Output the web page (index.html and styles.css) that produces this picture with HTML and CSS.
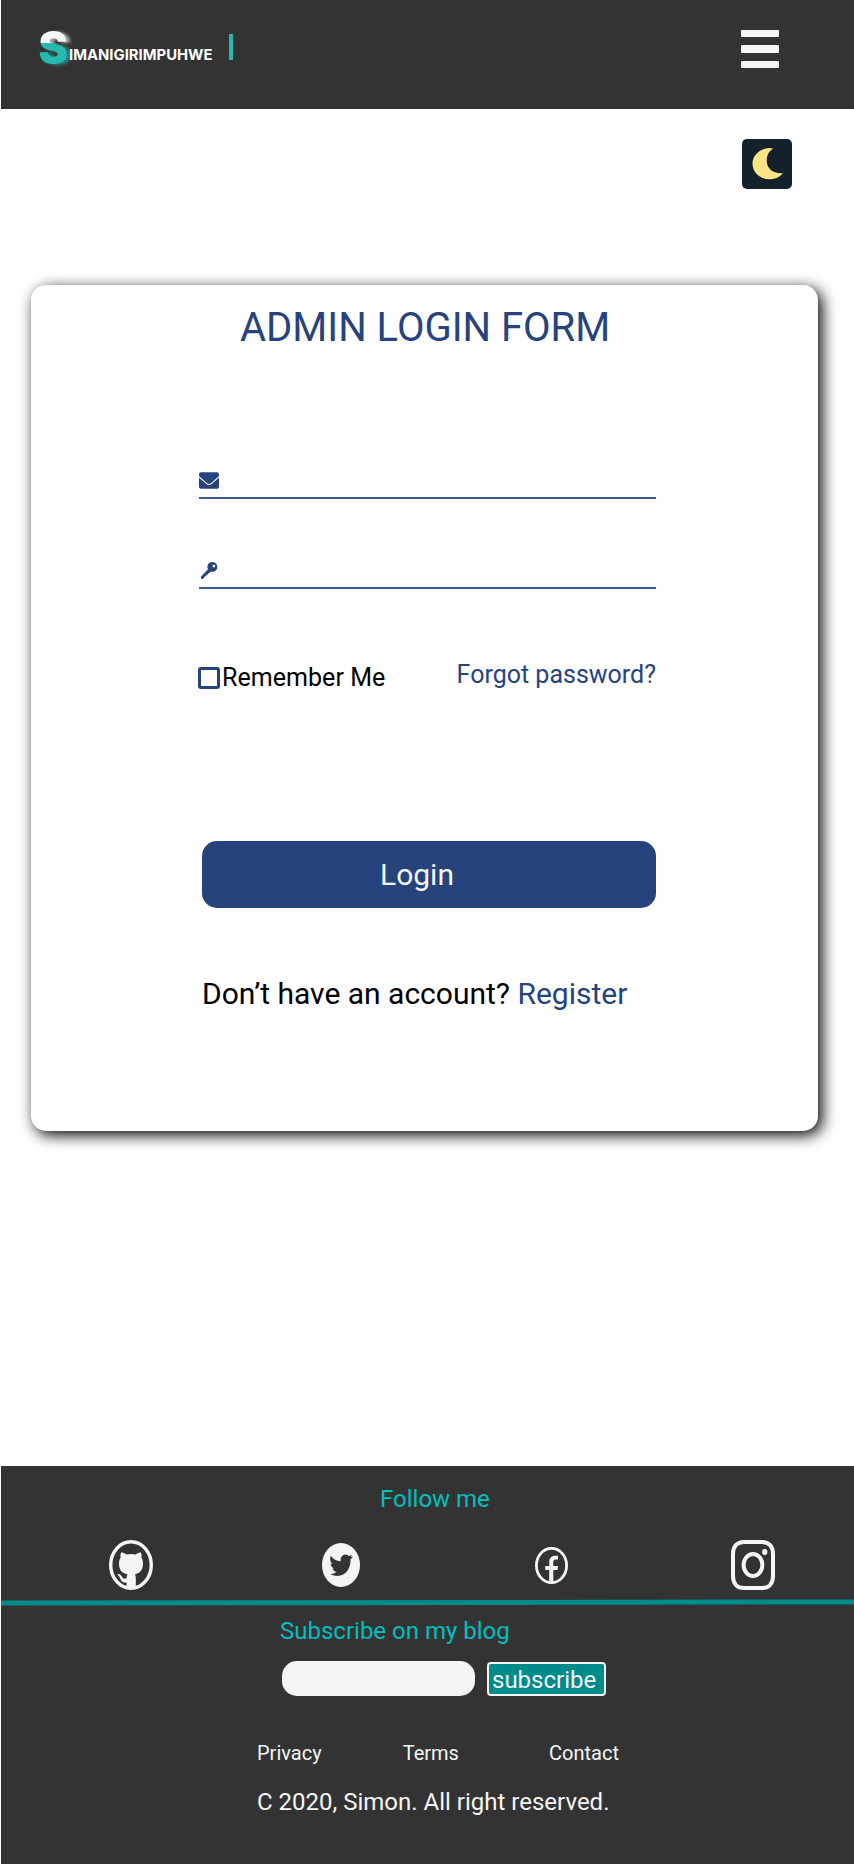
FILE: index.html
```html
<!DOCTYPE html>
<html lang="en">
<head>
<meta charset="utf-8">
<title>Admin Login</title>
<link rel="stylesheet" href="styles.css">
</head>
<body>
<header class="header">
  <svg class="logo" width="200" height="48" viewBox="40 24 200 48" role="img" aria-label="Simanigirimpuhwe">
    <defs>
      <linearGradient id="split" gradientUnits="userSpaceOnUse" x1="0" y1="31" x2="0" y2="65">
        <stop offset=".355" stop-color="#f5f5f5"/><stop offset=".355" stop-color="#26b9b0"/>
      </linearGradient>
      <filter id="glow" x="-30%" y="-30%" width="170%" height="160%">
        <feOffset in="SourceGraphic" dx="4" dy="1"/>
        <feGaussianBlur stdDeviation="1.7"/>
        <feComponentTransfer result="b"><feFuncA type="linear" slope=".6"/></feComponentTransfer>
        <feMerge><feMergeNode in="b"/><feMergeNode in="SourceGraphic"/></feMerge>
      </filter>
    </defs>
    <text class="logo-s" x="38.500" y="64.300" textLength="29.500" lengthAdjust="spacingAndGlyphs" fill="url(#split)" filter="url(#glow)">S</text>
    <text class="logo-rest" x="69" y="60" textLength="143.500" lengthAdjust="spacingAndGlyphs">IMANIGIRIMPUHWE</text>
    <rect x="229" y="34" width="4" height="26" fill="#26b9b0"/>
  </svg>
  <button class="menu" aria-label="Menu"><span></span><span></span><span></span></button>
</header>
<main class="main">
  <button class="theme" aria-label="Dark mode">
    <svg width="50" height="50" viewBox="0 0 50 50"><path fill="#fde484" d="M31.300 9.500A17 15.600 0 1 0 41 34.200C31 35 24.700 29.500 24.700 21.500C24.700 16.500 27 12 31.300 9.500Z"/></svg>
  </button>
  <form class="card">
    <h1 class="title">ADMIN LOGIN FORM</h1>
    <div class="field">
      <svg width="20" height="17" viewBox="0 0 20 17" fill="#26437d"><path d="M2 .3H18Q20 .3 20 2.300V4L12 11.300Q10 12.900 8 11.300L0 4V2.300Q0 .3 2 .3Z"/><path d="M0 5.400L7.300 12Q10 14.300 12.700 12L20 5.400V14.700Q20 16.700 18 16.700H2Q0 16.700 0 14.700Z"/></svg>
    </div>
    <div class="field field-key">
      <svg width="20" height="17" viewBox="0 0 20 17"><path fill="#26437d" fill-rule="evenodd" d="M13.500 0A4.900 4.900 0 1 1 11.800 9.500L10.500 11L9.200 11.200L9 12.600L7.200 12.900L7.300 14.200L6 14.300L4 17H2.300L1.900 14.800L9 7.300A4.900 4.900 0 0 1 13.500 0ZM14.900 2.700A1.400 1.400 0 1 0 14.900 5.500A1.400 1.400 0 0 0 14.900 2.700Z"/></svg>
    </div>
    <div class="options">
      <label class="remember"><span class="box"></span><span>Remember Me</span></label>
      <a class="forgot">Forgot password?</a>
    </div>
    <button class="login" type="button">Login</button>
    <p class="signup">Don’t have an account? <a>Register</a></p>
  </form>
</main>
<footer class="footer">
  <h2 class="follow">Follow me</h2>
  <div class="social">
    <svg class="github" width="44" height="50" viewBox="0 0 44 50" preserveAspectRatio="none">
      <ellipse cx="22" cy="25" rx="20.300" ry="23.300" fill="none" stroke="#f5f5f5" stroke-width="3.400"/>
      <path fill="#f5f5f5" d="M12 12.500C14 12 16 13.200 17.500 14.400Q22 13.400 26.500 14.400C28 13.200 30 12 32 12.500Q33 15 32.400 17.600Q34 19.600 34 23.500C34 30 31 33.300 26 34.200Q26.800 35.800 26.800 38V48H17.600V42.500C13 43 12 40.500 11 38C10.200 36 9 35.500 8.300 34.300C10 33 12 35 13 36.700C14 39 16 39 17.600 38.200Q17.600 35.700 18.500 34.200C13 33.300 10 30 10 23.500Q10 19.600 11.600 17.600Q11 15 12 12.500Z"/>
    </svg>
    <svg class="twitter" width="38" height="44" viewBox="0 0 38 44" preserveAspectRatio="none">
      <ellipse cx="19" cy="22" rx="19" ry="22" fill="#f5f5f5"/>
      <path fill="#333" d="M8.800 12.700C11 16 14.500 18 18.800 18.300C18 14.500 20.500 11.500 23.500 11.500Q25.500 11.500 26.900 13L29.800 11.800L28.600 14.100L31 13.500Q30 15.200 28.500 16.300C29 25 24 33 15.500 33Q11.500 33 8.300 31Q12 31.200 14.500 28.900Q11.500 28.500 10.300 25.500H12.200Q9 24.300 8.600 20.400L10.600 20.900C8 19 7.500 15.500 8.800 12.700Z"/>
    </svg>
    <svg class="facebook" width="33" height="37" viewBox="0 0 33 37" preserveAspectRatio="none">
      <ellipse cx="16.500" cy="18.500" rx="15.100" ry="17.100" fill="none" stroke="#f5f5f5" stroke-width="2.800"/>
      <path fill="#f5f5f5" d="M14.200 35V23H10.300V18.900H14.200V15.200C14.200 11 16.500 8.700 20 8.700H23V12.600H20.500Q18.300 12.600 18.300 15.500V18.900H23L22.500 23H18.300V35Z"/>
    </svg>
    <svg class="instagram" width="44" height="50" viewBox="0 0 44 50" preserveAspectRatio="none" fill="none" stroke="#f5f5f5">
      <path stroke-width="4" d="M13 2H31C38 2 42 6.500 42 14V36C42 43.500 38 48 31 48H13C6 48 2 43.500 2 36V14C2 6.500 6 2 13 2Z"/>
      <ellipse cx="22" cy="25" rx="9.400" ry="10.900" stroke-width="4"/>
      <ellipse cx="33.700" cy="12" rx="2.700" ry="3" fill="#f5f5f5" stroke="none"/>
    </svg>
  </div>
  <svg class="rule" width="853" height="7" viewBox="0 0 853 7"><path d="M0 4L853 3" stroke="#008b8b" stroke-width="5"/></svg>
  <h2 class="blog">Subscribe on my blog</h2>
  <form class="subscribe">
    <input class="email" type="email" aria-label="Email">
    <button class="send" type="button">subscribe</button>
  </form>
  <nav class="links"><a>Privacy</a><a class="terms">Terms</a><a>Contact</a></nav>
  <p class="copyright">C 2020, Simon. All right reserved.</p>
</footer>
</body>
</html>
```
FILE: styles.css
```css
* { box-sizing: border-box; }
body { margin: 0; width: 854px; padding-left: 1px; background: #fff; font-family: Roboto, sans-serif; font-size: 24px; line-height: 30px; }
h1, h2, p { margin: 0; font-size: 24px; font-weight: 400; white-space: nowrap; }
svg { display: block; overflow: visible; }
button { border: 0; padding: 0; font: inherit; }

.header { display: flex; justify-content: space-between; align-items: flex-start; height: 109px; padding: 24px 75px 0 39px; background: #333; }
.logo-s { font: 900 45px Inter, sans-serif; }
.logo-rest { font: 700 15px Inter, sans-serif; fill: #fff; }
.menu { display: flex; flex-direction: column; gap: 8.300px; width: 38px; margin-top: 6px; background: none; }
.menu span { height: 7.200px; border-radius: 1px; background: #f5f5f5; }

.main { height: 1357px; padding: 30px 36px 0 30px; }
.theme { display: block; width: 50px; height: 50px; margin: 0 26px 96px auto; border-radius: 5px; background: #14202a; }
.card { width: 787px; height: 846px; padding: 19px 162px 0 168px; border-radius: 15px; background: #fefefe; box-shadow: 4px 4px 15px #000; color: #000; }
.title { margin-left: 41px; font-size: 40px; line-height: 48px; color: #26437d; }
.field { height: 28px; margin-top: 119px; padding-top: 1px; border-bottom: 2px solid #3c5a94; }
.field-key { margin-top: 62px; }
.options { display: flex; justify-content: space-between; height: 31px; margin-top: 74px; font-size: 25px; }
.remember { display: flex; align-items: center; gap: 2px; height: 30px; margin-left: -1px; letter-spacing: .05px; }
.box { width: 22px; height: 22px; border: 3px solid #26437d; border-radius: 3px; }
.forgot { color: #26437d; margin-top: -3px; }
.login { display: block; width: 454px; height: 67px; margin: 147px 0 0 3px; padding-right: 24px; border-radius: 15px; background: #26437d; color: #f5f5f5; font-size: 30px; }
.signup { margin: 68px 0 0 3px; font-size: 30px; line-height: 36px; }
.signup a { color: #26437d; }

.footer { height: 398px; padding-top: 18px; background: #333; color: #f5f5f5; }
.follow { margin-left: 379px; color: #00bfbf; }
.social { display: flex; align-items: center; height: 50px; margin: 26px 0 0 108px; }
.twitter { margin-left: 169px; }
.facebook { margin-left: 175px; }
.instagram { margin-left: 163px; }
.rule { margin-top: 9px; }
.blog { margin: 10px 0 0 279px; color: #00bfbf; }
.subscribe { display: flex; gap: 12px; margin: 15px 0 0 281px; }
.email { width: 193px; height: 35px; border: 0; border-radius: 15px; background: #f5f5f5; }
.send { width: 119px; height: 34px; margin-top: 1px; padding: 1px 6px 0 3px; border: 2px solid #f5f5f5; border-radius: 4px; background: #008b8b; color: #f5f5f5; text-align: left; }
.links { display: flex; justify-content: space-between; width: 362px; margin: 42px 0 0 256px; font-size: 20px; }
.terms { margin-right: 9px; }
.copyright { margin: 19px 0 0 256px; }
```
